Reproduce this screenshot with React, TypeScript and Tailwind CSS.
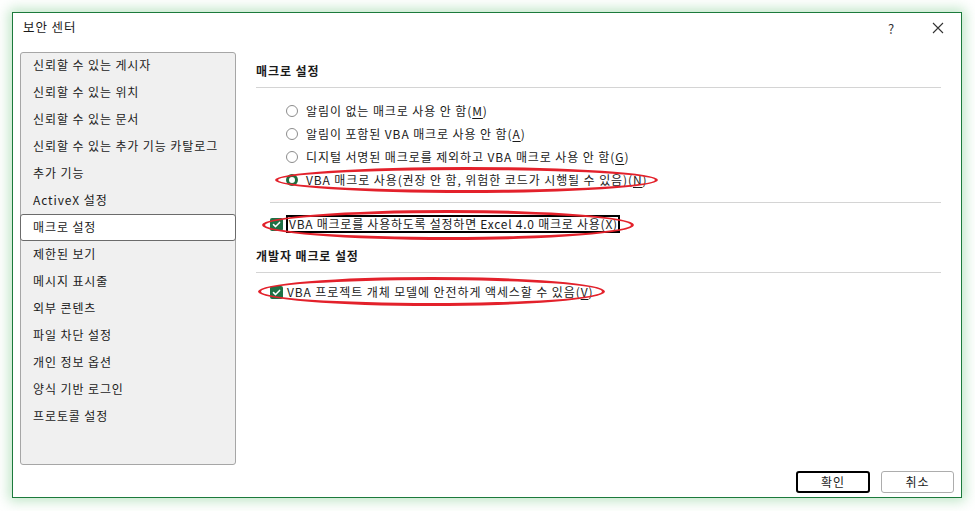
import { ReactNode } from 'react'

const font = { fontFamily: '"Noto Sans CJK KR", "Noto Sans", sans-serif' }

const menuItems = [
  '신뢰할 수 있는 게시자',
  '신뢰할 수 있는 위치',
  '신뢰할 수 있는 문서',
  '신뢰할 수 있는 추가 기능 카탈로그',
  '추가 기능',
  'ActiveX 설정',
  '매크로 설정',
  '제한된 보기',
  '메시지 표시줄',
  '외부 콘텐츠',
  '파일 차단 설정',
  '개인 정보 옵션',
  '양식 기반 로그인',
  '프로토콜 설정',
]

function Key({ k }: { k: string }) {
  return (
    <>
      (<span className="underline underline-offset-2">{k}</span>)
    </>
  )
}

function Radio({ checked, children }: { checked?: boolean; children: ReactNode }) {
  return (
    <div className="flex items-center h-[23px] pl-[30px]">
      {checked ? (
        <span className="w-[12px] h-[12px] rounded-full border-[3.5px] border-[#1e6e3e] bg-white shrink-0" />
      ) : (
        <span className="w-[12px] h-[12px] rounded-full border border-[#8c8c8c] bg-white shrink-0" />
      )}
      <span className="ml-[8px] whitespace-nowrap">{children}</span>
    </div>
  )
}

function CheckBox() {
  return (
    <span className="w-[13px] h-[13px] rounded-[2px] bg-[#1e7145] flex items-center justify-center shrink-0">
      <svg width="9" height="9" viewBox="0 0 9 9" fill="none">
        <path d="M1.5 4.6 L3.6 6.6 L7.6 2.4" stroke="white" strokeWidth="1.5" strokeLinecap="round" strokeLinejoin="round" />
      </svg>
    </span>
  )
}

export default function App() {
  return (
    <div className="w-[975px] h-[511px] bg-white text-[12px] tracking-[0.9px] text-[#1b1b1b] relative overflow-hidden" style={font}>
      <div className="absolute left-[12px] top-[12px] w-[950px] h-[486px] border border-[#1c7a3c] bg-white shadow-[0_0_12px_3px_rgba(90,190,110,0.4)] flex flex-col">
        {/* 제목 표시줄 */}
        <div className="h-[30px] flex items-center pl-[10px] pb-[1px] relative">
          <span className="text-[12.5px]">보안 센터</span>
          <span className="absolute left-[875px] top-[6px] text-[13px] text-[#333]">?</span>
          <svg className="absolute left-[919px] top-[9px]" width="12" height="12" viewBox="0 0 12 12">
            <path d="M1 1 L11 11 M11 1 L1 11" stroke="#333" strokeWidth="1.1" />
          </svg>
        </div>

        {/* 본문 */}
        <div className="flex pl-[7px] pt-[9px]">
          <div className="w-[216px] h-[413px] bg-[#f0f0f0] border border-[#a6a6a6] rounded-[3px] flex flex-col">
            {menuItems.map((item) =>
              item === '매크로 설정' ? (
                <div
                  key={item}
                  className="h-[27px] -mx-px -mt-px mb-px flex items-center pl-[12px] pb-[1px] bg-white border border-[#6b6b6b] rounded-[3px]"
                >
                  {item}
                </div>
              ) : (
                <div key={item} className="h-[27px] flex items-center pl-[12px] pb-[3px] whitespace-nowrap">
                  {item}
                </div>
              )
            )}
          </div>

          <div className="flex-1 ml-[20px] mr-[20px] flex flex-col">
            <div className="mt-[9px] h-[20px] flex items-center font-semibold">매크로 설정</div>
            <div className="mt-[6px] h-px bg-[#d4d4d4]" />

            <div className="mt-[11px]">
              <Radio>
                알림이 없는 매크로 사용 안 함<Key k="M" />
              </Radio>
              <Radio>
                알림이 포함된 VBA 매크로 사용 안 함<Key k="A" />
              </Radio>
              <Radio>
                디지털 서명된 매크로를 제외하고 VBA 매크로 사용 안 함<Key k="G" />
              </Radio>
              <Radio checked>
                VBA 매크로 사용(권장 안 함, 위험한 코드가 시행될 수 있음)<Key k="N" />
              </Radio>
            </div>

            <div className="mt-[11px] ml-[14px] h-px bg-[#d4d4d4]" />

            <div className="mt-[12px] h-[18px] flex items-center pl-[14px]">
              <CheckBox />
              <span className="ml-[3px] h-[18px] flex items-center border-2 border-black pl-[1px] pr-0 whitespace-nowrap tracking-[0.75px]">
                VBA 매크로를 사용하도록 설정하면 Excel 4.0 매크로 사용<Key k="X" />
              </span>
            </div>

            <div className="mt-[13px] h-[20px] flex items-center font-semibold">개발자 매크로 설정</div>
            <div className="mt-[6px] h-px bg-[#d4d4d4]" />

            <div className="mt-[10px] h-[18px] flex items-center pl-[14px]">
              <CheckBox />
              <span className="ml-[4px] whitespace-nowrap">
                VBA 프로젝트 개체 모델에 안전하게 액세스할 수 있음<Key k="V" />
              </span>
            </div>
          </div>
        </div>

        {/* 버튼 */}
        <div className="flex justify-end gap-[11px] pr-[7px] mt-[6px]">
          <button className="w-[74px] h-[22px] border-2 border-black rounded-[3px] bg-white text-[12px] flex items-center justify-center">
            확인
          </button>
          <button className="w-[73px] h-[22px] border border-[#adadad] rounded-[3px] bg-white text-[12px] flex items-center justify-center">
            취소
          </button>
        </div>
      </div>

      {/* 빨간 강조 표시 */}
      <div className="absolute left-[275px] top-[167px] w-[383px] h-[26px] rounded-[50%] border-[3px] border-[#e3212b]" />
      <div className="absolute left-[262px] top-[210px] w-[372px] h-[30px] rounded-[50%] border-[3px] border-[#e3212b]" />
      <div className="absolute left-[258px] top-[277px] w-[347px] h-[29px] rounded-[50%] border-[3px] border-[#e3212b]" />
    </div>
  )
}
